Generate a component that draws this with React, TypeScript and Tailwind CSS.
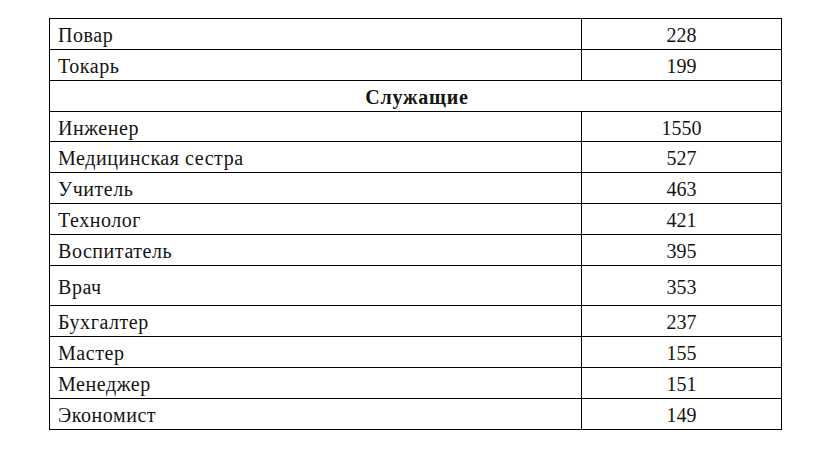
const workers = [
  { name: "Повар", count: 228, h: "h-[31px]" },
  { name: "Токарь", count: 199, h: "h-[31px]" },
];

// Служащие — row heights follow the source table (Врач row is taller)
const employees = [
  { name: "Инженер", count: 1550, h: "h-[30px]" },
  { name: "Медицинская сестра", count: 527, h: "h-[31px]" },
  { name: "Учитель", count: 463, h: "h-[31px]" },
  { name: "Технолог", count: 421, h: "h-[31px]" },
  { name: "Воспитатель", count: 395, h: "h-[31px]" },
  { name: "Врач", count: 353, h: "h-[40px]" },
  { name: "Бухгалтер", count: 237, h: "h-[31px]" },
  { name: "Мастер", count: 155, h: "h-[31px]" },
  { name: "Менеджер", count: 151, h: "h-[31px]" },
  { name: "Экономист", count: 149, h: "h-[31px]" },
];

function Row({ name, count, h }: { name: string; count: number; h: string }) {
  return (
    <div className={`grid grid-cols-[532px_200px] border-b border-black ${h}`}>
      <div className="flex items-center border-r border-black pl-[8px] pt-[2px] tracking-[0.55px]">{name}</div>
      <div className="flex items-center justify-center border-r border-black pt-[2px]">{count}</div>
    </div>
  );
}

export default function App() {
  return (
    <div className="w-[824px] h-[453px] bg-white overflow-hidden pt-[18px] pl-[49px] font-['Liberation_Serif',serif] text-[20px] leading-none text-[#141414]">
      <div className="flex flex-col w-[733px] border-l border-t border-black">
        {workers.map((r) => (
          <Row key={r.name} {...r} />
        ))}
        <div className="flex h-[31px] items-center justify-center border-b border-r border-black pt-[2px] pl-[3px] font-bold tracking-[0.8px]">
          Служащие
        </div>
        {employees.map((r) => (
          <Row key={r.name} {...r} />
        ))}
      </div>
    </div>
  );
}
